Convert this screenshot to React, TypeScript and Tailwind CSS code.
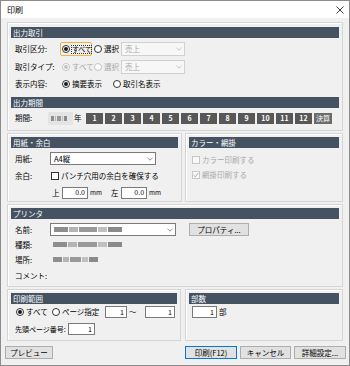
import React from 'react';

const months = ['1', '2', '3', '4', '5', '6', '7', '8', '9', '10', '11', '12'];

function Radio({ checked, disabled }: { checked?: boolean; disabled?: boolean }) {
  return (
    <span
      className={`flex h-[8px] w-[8px] shrink-0 items-center justify-center rounded-full border bg-white ${
        disabled ? 'border-[#c2c2c2]' : 'border-[#333333]'
      }`}
    >
      {checked && <span className={`h-[4px] w-[4px] rounded-full ${disabled ? 'bg-[#c2c2c2]' : 'bg-[#1a1a1a]'}`} />}
    </span>
  );
}

function Check({ checked, disabled }: { checked?: boolean; disabled?: boolean }) {
  return (
    <span
      className={`flex h-[8px] w-[8px] shrink-0 items-center justify-center border ${
        disabled ? 'border-[#c8c8c8] bg-[#f7f7f7]' : 'border-[#333333] bg-white'
      }`}
    >
      {checked && (
        <svg width="6" height="6" viewBox="0 0 6 6">
          <path d="M0.6 3.2 L2.3 4.8 L5.4 1" fill="none" stroke={disabled ? '#a8a8a8' : '#222'} strokeWidth="0.9" />
        </svg>
      )}
    </span>
  );
}

function Chevron({ color = '#7a7a7a' }: { color?: string }) {
  return (
    <svg width="6" height="4" viewBox="0 0 6 4" className="shrink-0">
      <path d="M0.5 0.8 L3 3.2 L5.5 0.8" fill="none" stroke={color} strokeWidth="0.8" />
    </svg>
  );
}

// gray smudge standing in for the masked text
function Blur({ className }: { className: string }) {
  return (
    <span className={`flex h-[5px] items-center gap-[1px] blur-[0.6px] ${className}`}>
      <span className="h-full flex-[3] bg-[#8e8e8e]" />
      <span className="h-full flex-[2] bg-[#b4b4b4]" />
      <span className="h-full flex-[4] bg-[#999999]" />
      <span className="h-full flex-[2] bg-[#c0c0c0]" />
      <span className="h-full flex-[3] bg-[#8a8a8a]" />
    </span>
  );
}

function Header({ children }: { children: React.ReactNode }) {
  return <div className="flex h-[11px] items-center bg-[#445262] pl-[2px] text-[7.5px] text-white">{children}</div>;
}

function Input({ value, className }: { value: string; className: string }) {
  return (
    <span className={`flex h-[12px] shrink-0 items-center justify-end border border-[#7a7a7a] bg-white pr-[2px] text-[7px] ${className}`}>
      {value}
    </span>
  );
}

function Btn({ children, className }: { children: React.ReactNode; className: string }) {
  return (
    <span className={`flex h-[13px] items-center justify-center border bg-[#e1e1e1] text-[7.5px] ${className}`}>
      {children}
    </span>
  );
}

export default function App() {
  return (
    <div
      className="flex h-[366px] w-[350px] flex-col overflow-hidden whitespace-nowrap border border-[#8c8c8c] bg-[#f0f0f0] text-[7.5px] leading-none text-black"
      style={{ fontFamily: '"Noto Sans CJK JP", "Noto Sans", sans-serif' }}
    >
      {/* title bar */}
      <div className="flex h-[17px] shrink-0 items-center justify-between bg-white pl-[6px] pr-[5px]">
        <span className="text-[8px]">印刷</span>
        <svg width="8" height="8" viewBox="0 0 8 8">
          <path d="M0.5 0.5 L7.5 7.5 M7.5 0.5 L0.5 7.5" stroke="#222" strokeWidth="0.9" />
        </svg>
      </div>

      <div className="flex flex-col px-[6px] pt-[4px]">
        {/* 出力取引 / 出力期間 */}
        <div className="flex h-[109px] flex-col border border-[#d5d5d5] px-[3px] pt-[4px] shadow-[inset_1px_1px_0_#fff]">
          <Header>出力取引</Header>
          <div className="mt-[4px] flex h-[14px] items-center pl-[4px]">
            <span className="w-[45px]">取引区分:</span>
            <span className="flex h-[14px] w-[32px] items-center gap-[1px] rounded-[2px] border border-[#f0b43c] pl-[1px]">
              <Radio checked />
              <span className="border border-dotted border-[#333] text-[7px] tracking-[-0.3px]">すべて</span>
            </span>
            <span className="flex w-[29px] items-center gap-[2px] pl-[2px]">
              <Radio />
              選択
            </span>
            <span className="flex h-[14px] w-[64px] items-center justify-between border border-[#d0d0d0] bg-[#f7f7f7] pl-[3px] pr-[2px] text-[#a8a8a8]">
              売上
              <Chevron color="#b8b8b8" />
            </span>
          </div>
          <div className="mt-[4px] flex h-[14px] items-center pl-[4px]">
            <span className="w-[45px]">取引タイプ:</span>
            <span className="flex w-[32px] items-center gap-[2px] pl-[2px] text-[#a8a8a8]">
              <Radio checked disabled />
              すべて
            </span>
            <span className="flex w-[29px] items-center gap-[2px] pl-[2px] text-[#a8a8a8]">
              <Radio disabled />
              選択
            </span>
            <span className="flex h-[14px] w-[64px] items-center justify-between border border-[#d0d0d0] bg-[#f7f7f7] pl-[3px] pr-[2px] text-[#a8a8a8]">
              売上
              <Chevron color="#b8b8b8" />
            </span>
          </div>
          <div className="mt-[3px] flex h-[14px] items-center pl-[4px]">
            <span className="w-[45px]">表示内容:</span>
            <span className="flex w-[53px] items-center gap-[2px] pl-[2px]">
              <Radio checked />
              摘要表示
            </span>
            <span className="flex items-center gap-[2px]">
              <Radio />
              取引名表示
            </span>
          </div>

          <div className="mt-[6px]">
            <Header>出力期間</Header>
          </div>
          <div className="mt-[3px] flex h-[14px] items-center pl-[4px]">
            <span className="w-[33px]">期間:</span>
            <span className="flex h-[13px] w-[25px] items-center bg-[#e4e4e4] pl-[3px]">
              <Blur className="w-[16px]" />
            </span>
            <span className="ml-[1px] w-[12px]">年</span>
            <div className="flex gap-[2px]">
              {months.map((m) => (
                <span
                  key={m}
                  className="flex h-[11px] w-[17px] items-center justify-center bg-[#585858] text-[7px] font-bold text-white"
                >
                  {m}
                </span>
              ))}
              <span className="flex h-[11px] w-[18px] items-center justify-center bg-[#6c6c6c] text-[7px] text-white">
                決算
              </span>
            </div>
          </div>
        </div>

        {/* 用紙・余白 / カラー・網掛 */}
        <div className="mt-[2px] flex gap-[3px]">
          <div className="flex h-[69px] w-[175px] flex-col border border-[#d5d5d5] px-[3px] pt-[3px] shadow-[inset_1px_1px_0_#fff]">
            <Header>用紙・余白</Header>
            <div className="mt-[4px] flex h-[13px] items-center pl-[4px]">
              <span className="w-[35px]">用紙:</span>
              <span className="flex h-[13px] w-[106px] items-center justify-between border border-[#7a7a7a] bg-white pl-[3px] pr-[2px]">
                A4縦
                <Chevron />
              </span>
            </div>
            <div className="mt-[4px] flex h-[13px] items-center pl-[4px]">
              <span className="w-[36px]">余白:</span>
              <Check />
              <span className="ml-[2px]">パンチ穴用の余白を確保する</span>
            </div>
            <div className="mt-[4px] flex h-[13px] items-center pl-[41px]">
              <span className="w-[8px]">上</span>
              <Input value="0.0" className="ml-[2px] w-[26px]" />
              <span className="ml-[2px] text-[6.5px]">mm</span>
              <span className="ml-[9px] w-[8px]">左</span>
              <Input value="0.0" className="ml-[2px] w-[26px]" />
              <span className="ml-[2px] text-[6.5px]">mm</span>
            </div>
          </div>
          <div className="flex h-[69px] flex-1 flex-col border border-[#d5d5d5] px-[3px] pt-[3px] shadow-[inset_1px_1px_0_#fff]">
            <Header>カラー・網掛</Header>
            <div className="mt-[7px] flex h-[10px] items-center gap-[2px] pl-[3px] text-[#a8a8a8]">
              <Check disabled />
              カラー印刷する
            </div>
            <div className="mt-[5px] flex h-[10px] items-center gap-[2px] pl-[3px] text-[#a8a8a8]">
              <Check checked disabled />
              網掛印刷する
            </div>
          </div>
        </div>

        {/* プリンタ */}
        <div className="mt-[2px] flex h-[83px] flex-col border border-[#d5d5d5] px-[3px] pt-[3px] shadow-[inset_1px_1px_0_#fff]">
          <Header>プリンタ</Header>
          <div className="mt-[4px] flex h-[13px] items-center pl-[4px]">
            <span className="w-[35px]">名前:</span>
            <span className="flex h-[13px] w-[126px] items-center justify-between border border-[#7a7a7a] bg-white pl-[3px] pr-[2px]">
              <Blur className="w-[68px]" />
              <Chevron />
            </span>
            <Btn className="ml-[13px] w-[60px] border-[#adadad]">プロパティ...</Btn>
          </div>
          <div className="mt-[2px] flex h-[13px] items-center pl-[4px]">
            <span className="w-[38px]">種類:</span>
            <Blur className="w-[69px]" />
          </div>
          <div className="mt-[2px] flex h-[13px] items-center pl-[4px]">
            <span className="w-[38px]">場所:</span>
            <Blur className="w-[45px]" />
          </div>
          <div className="mt-[3px] flex h-[13px] items-center pl-[4px]">
            <span>コメント:</span>
          </div>
        </div>

        {/* 印刷範囲 / 部数 */}
        <div className="mt-[2px] flex gap-[4px]">
          <div className="flex h-[52px] w-[174px] flex-col border border-[#d5d5d5] px-[3px] pt-[3px] shadow-[inset_1px_1px_0_#fff]">
            <Header>印刷範囲</Header>
            <div className="mt-[2px] flex h-[12px] items-center pl-[5px]">
              <span className="flex w-[36px] items-center gap-[2px]">
                <Radio checked />
                すべて
              </span>
              <span className="flex w-[53px] items-center gap-[2px]">
                <Radio />
                ページ指定
              </span>
              <Input value="1" className="w-[22px]" />
              <span className="ml-[2px] w-[16px]">～</span>
              <Input value="1" className="w-[30px]" />
            </div>
            <div className="mt-[5px] flex h-[12px] items-center pl-[4px]">
              <span className="w-[53px] text-[7px]">先頭ページ番号:</span>
              <Input value="1" className="w-[27px]" />
            </div>
          </div>
          <div className="flex h-[52px] flex-1 flex-col border border-[#d5d5d5] px-[3px] pt-[3px] shadow-[inset_1px_1px_0_#fff]">
            <Header>部数</Header>
            <div className="mt-[2px] flex h-[12px] items-center pl-[3px]">
              <Input value="1" className="w-[25px]" />
              <span className="ml-[2px]">部</span>
            </div>
          </div>
        </div>
      </div>

      {/* buttons */}
      <div className="mt-[5px] flex items-center justify-between pl-[4px] pr-[3px]">
        <Btn className="w-[48px] border-[#adadad]">プレビュー</Btn>
        <div className="flex gap-[3px]">
          <Btn className="w-[52px] border-[#0078d7]">印刷(F12)</Btn>
          <Btn className="w-[51px] border-[#adadad]">キャンセル</Btn>
          <Btn className="w-[52px] border-[#adadad]">詳細設定...</Btn>
        </div>
      </div>
    </div>
  );
}
